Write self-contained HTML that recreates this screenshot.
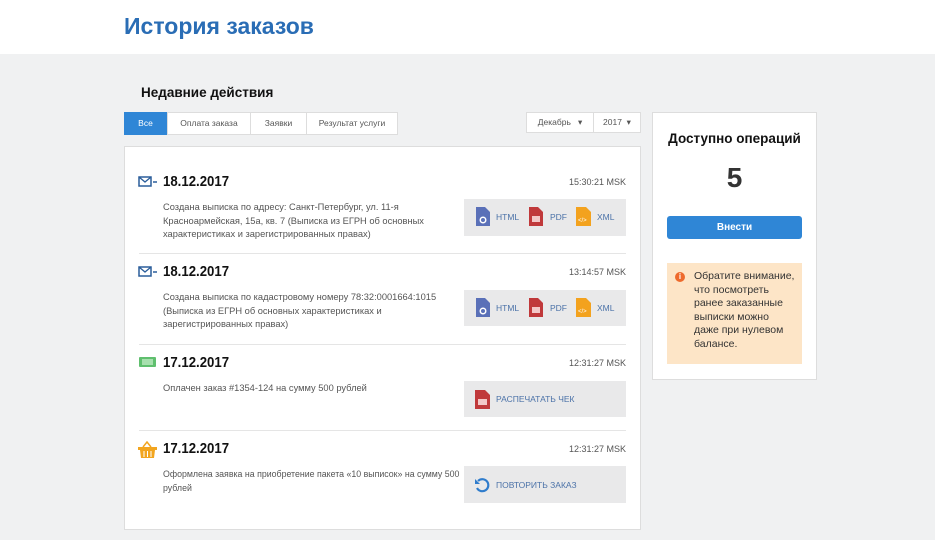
<!DOCTYPE html>
<html><head><meta charset="utf-8"><style>
*{margin:0;padding:0;box-sizing:border-box}
body{width:935px;height:540px;background:#f0f1f2;font-family:"Liberation Sans",sans-serif;position:relative;overflow:hidden;color:#333}
.a{position:absolute}
.hdr{left:0;top:0;width:935px;height:54px;background:#fff}
h1{position:absolute;left:124px;top:13px;font-size:23px;color:#2a6db5;font-weight:bold}
.tab{position:absolute;top:112px;height:23px;background:#fff;border:1px solid #ddd;font-size:8.5px;color:#555;text-align:center;line-height:21px}
.card{left:124px;top:146px;width:517px;height:384px;background:#fff;border:1px solid #ddd}
.date{position:absolute;left:163px;font-size:15px;font-weight:bold;color:#111;transform:scaleX(0.88);transform-origin:left}
.time{position:absolute;right:309px;font-size:9px;color:#555}
.txt{position:absolute;left:163px;width:292px;font-size:9.3px;line-height:13.5px;color:#555}
.btn{position:absolute;left:464px;width:162px;background:#e9e9ea;font-size:8.5px;color:#4b72a8}
.sep{position:absolute;left:139px;width:487px;height:1px;background:#e5e5e5}
</style></head><body>
<div class="a hdr"></div>
<h1>История заказов</h1>
<div class="a" style="left:141px;top:85px;font-size:13.5px;font-weight:bold;color:#111">Недавние действия</div>
<div class="tab" style="left:124px;width:43px;background:#2f86d6;color:#fff;border-color:#2f86d6">Все</div>
<div class="tab" style="left:167px;width:84px">Оплата заказа</div>
<div class="tab" style="left:250px;width:57px">Заявки</div>
<div class="tab" style="left:306px;width:92px">Результат услуги</div>
<div class="tab" style="left:526px;width:68px;height:21px;line-height:19px">Декабрь &nbsp;&nbsp;▾</div>
<div class="tab" style="left:593px;width:48px;height:21px;line-height:19px">2017 &nbsp;▾</div>
<div class="a card"></div>

<svg class="a" style="left:138px;top:176px" width="20" height="12"><rect x="1" y="1" width="12" height="9" fill="none" stroke="#2a5d9a" stroke-width="1.5"/><path d="M1 1l6 5 6-5" fill="none" stroke="#2a5d9a" stroke-width="1.3"/><path d="M15 6h4" stroke="#2a5d9a" stroke-width="1.5"/></svg>
<div class="date" style="top:173px">18.12.2017</div>
<div class="time" style="top:177px">15:30:21 MSK</div>
<div class="txt" style="top:201px">Создана выписка по адресу: Санкт-Петербург, ул. 11-я Красноармейская, 15а, кв. 7 (Выписка из ЕГРН об основных характеристиках и зарегистрированных правах)</div>
<div class="btn" style="top:199px;height:37px"></div>
<div class="sep" style="top:253px"></div>

<svg class="a" style="left:138px;top:266px" width="20" height="12"><rect x="1" y="1" width="12" height="9" fill="none" stroke="#2a5d9a" stroke-width="1.5"/><path d="M1 1l6 5 6-5" fill="none" stroke="#2a5d9a" stroke-width="1.3"/><path d="M15 6h4" stroke="#2a5d9a" stroke-width="1.5"/></svg>
<div class="date" style="top:263px">18.12.2017</div>
<div class="time" style="top:267px">13:14:57 MSK</div>
<div class="txt" style="top:291px">Создана выписка по кадастровому номеру 78:32:0001664:1015 (Выписка из ЕГРН об основных характеристиках и зарегистрированных правах)</div>
<div class="btn" style="top:290px;height:36px"></div>
<div class="sep" style="top:344px"></div>

<svg class="a" style="left:139px;top:356px" width="17" height="12"><rect x="0" y="1" width="17" height="10" rx="1" fill="#5fbf6e"/><rect x="3" y="3" width="11" height="6" fill="#a7e0ae"/></svg>
<div class="date" style="top:354px">17.12.2017</div>
<div class="time" style="top:358px">12:31:27 MSK</div>
<div class="txt" style="top:382px">Оплачен заказ #1354-124 на сумму 500 рублей</div>
<div class="btn" style="top:381px;height:36px"><svg class="a" style="left:11px;top:9px" width="15" height="19"><path d="M0 0h10l5 5v14H0z" fill="#c0393b"/><rect x="3" y="9" width="9" height="6" fill="#f3c8c8"/></svg><span class="a" style="left:32px;top:13px">РАСПЕЧАТАТЬ ЧЕК</span></div>
<div class="sep" style="top:430px"></div>

<svg class="a" style="left:138px;top:441px" width="19" height="17"><path d="M5 6l4-5 4 5" fill="none" stroke="#f2a51f" stroke-width="1.5"/><rect x="0" y="6" width="19" height="3" fill="#f2a51f"/><path d="M2 9h15l-1 8H3z" fill="#f2a51f"/><path d="M6 10v6M9.5 10v6M13 10v6" stroke="#fff" stroke-width="1"/></svg>
<div class="date" style="top:440px">17.12.2017</div>
<div class="time" style="top:444px">12:31:27 MSK</div>
<div class="txt" style="top:468px;width:300px;white-space:nowrap;font-size:8.8px">Оформлена заявка на приобретение пакета «10 выписок» на сумму 500<br>рублей</div>
<div class="btn" style="top:466px;height:37px"><svg class="a" style="left:10px;top:11px" width="16" height="16"><path d="M4 4a6 6 0 1 1-1 7" fill="none" stroke="#2f7ccc" stroke-width="2.2"/><path d="M1 2v5h5z" fill="#2f7ccc"/></svg><span class="a" style="left:32px;top:14px">ПОВТОРИТЬ ЗАКАЗ</span></div>

<div class="a" style="left:0;top:0">
<svg class="a" style="left:476px;top:207px" width="14" height="19"><path d="M0 0h9l5 5v14H0z" fill="#5a70b8"/><circle cx="7" cy="13" r="3.5" fill="#fff"/><circle cx="7" cy="13" r="2" fill="#5a70b8"/></svg>
<span class="a" style="left:496px;top:212px;font-size:8.5px;color:#4b72a8">HTML</span>
<svg class="a" style="left:529px;top:207px" width="14" height="19"><path d="M0 0h9l5 5v14H0z" fill="#c0393b"/><rect x="3" y="9" width="8" height="6" fill="#f3c8c8"/></svg>
<span class="a" style="left:550px;top:212px;font-size:8.5px;color:#4b72a8">PDF</span>
<svg class="a" style="left:576px;top:207px" width="15" height="19"><path d="M0 0h10l5 5v14H0z" fill="#f3a21e"/><text x="2" y="15" font-size="6" fill="#fff" font-family="Liberation Sans">&lt;/&gt;</text></svg>
<span class="a" style="left:597px;top:212px;font-size:8.5px;color:#4b72a8">XML</span>

<svg class="a" style="left:476px;top:298px" width="14" height="19"><path d="M0 0h9l5 5v14H0z" fill="#5a70b8"/><circle cx="7" cy="13" r="3.5" fill="#fff"/><circle cx="7" cy="13" r="2" fill="#5a70b8"/></svg>
<span class="a" style="left:496px;top:303px;font-size:8.5px;color:#4b72a8">HTML</span>
<svg class="a" style="left:529px;top:298px" width="14" height="19"><path d="M0 0h9l5 5v14H0z" fill="#c0393b"/><rect x="3" y="9" width="8" height="6" fill="#f3c8c8"/></svg>
<span class="a" style="left:550px;top:303px;font-size:8.5px;color:#4b72a8">PDF</span>
<svg class="a" style="left:576px;top:298px" width="15" height="19"><path d="M0 0h10l5 5v14H0z" fill="#f3a21e"/><text x="2" y="15" font-size="6" fill="#fff" font-family="Liberation Sans">&lt;/&gt;</text></svg>
<span class="a" style="left:597px;top:303px;font-size:8.5px;color:#4b72a8">XML</span>
</div>

<div class="a" style="left:652px;top:112px;width:165px;height:268px;background:#fff;border:1px solid #ddd"></div>
<div class="a" style="left:652px;top:131px;width:165px;text-align:center;font-size:13.5px;font-weight:bold;color:#111">Доступно операций</div>
<div class="a" style="left:652px;top:162px;width:165px;text-align:center;font-size:28px;font-weight:bold;color:#333">5</div>
<div class="a" style="left:667px;top:216px;width:135px;height:23px;background:#2f86d6;border-radius:3px;color:#fff;font-size:10px;font-weight:bold;text-align:center;line-height:23px">Внести</div>
<div class="a" style="left:667px;top:263px;width:135px;height:101px;background:#fde5c7"></div>
<div class="a" style="left:675px;top:272px;width:10px;height:10px;border-radius:50%;background:#ee6a2c;color:#fff;font-size:8px;font-weight:bold;text-align:center;line-height:10px">i</div>
<div class="a" style="left:694px;top:270px;width:105px;font-size:10.5px;line-height:13.6px;color:#333;white-space:nowrap">Обратите внимание,<br>что посмотреть<br>ранее заказанные<br>выписки можно<br>даже при нулевом<br>балансе.</div>
</body></html>
